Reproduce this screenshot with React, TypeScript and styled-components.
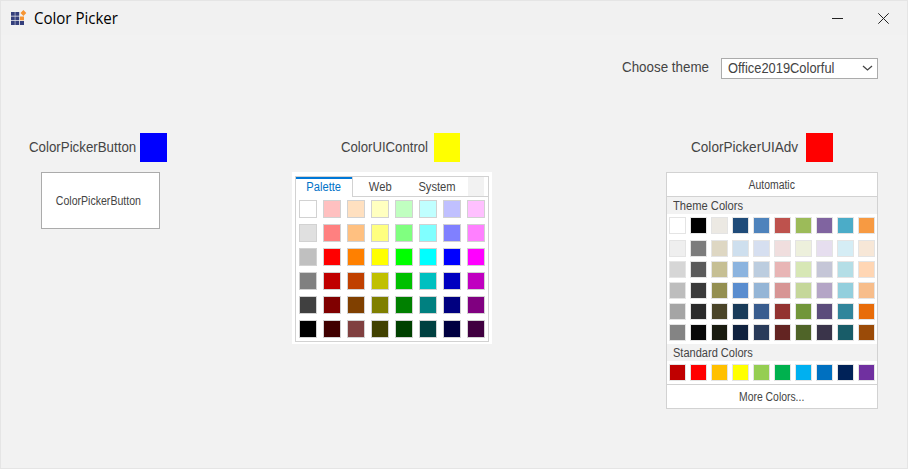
import React from "react";
import styled, { createGlobalStyle } from "styled-components";

const GlobalStyle = createGlobalStyle`
  * { box-sizing: border-box; }
  body { margin: 0; background: #f2f2f2; }
  button { font: inherit; color: inherit; padding: 0; margin: 0; }
`;

const Window = styled.div`
  width: 908px;
  height: 469px;
  border: 1px solid #e5e5e5;
  background: #f2f2f2;
  color: #444;
  font: 14px/16px "Liberation Sans", Arial, sans-serif;
  white-space: nowrap;
  overflow: hidden;
`;

const TitleBar = styled.header`
  display: flex;
  align-items: center;
  height: 34px;
  padding: 0 18px 0 10px;
  background: #f1f1f1;
`;

const Title = styled.h1`
  flex: 1;
  margin: 0 0 0 7px;
  color: #000;
  font: 400 16px/22px "Open Sans", "Noto Sans", sans-serif;
`;

const Caption = styled.button`
  display: flex;
  width: 11px;
  height: 11px;
  margin-left: 35px;
  border: 0;
  background: none;
`;

const ThemeRow = styled.div`
  display: flex;
  justify-content: flex-end;
  padding: 23px 29px 0 0;
  height: 44px;
`;

const Condensed = styled.span<{ $scale: number; $origin?: string }>`
  display: inline-block;
  transform: scaleX(${(p) => p.$scale});
  transform-origin: ${(p) => p.$origin ?? "left"};
`;

const Label = styled(Condensed)<{ $w: number }>`
  flex: none;
  width: ${(p) => p.$w}px;
  margin-bottom: 2px;
`;

const ThemeLabel = styled(Label)`
  margin-top: 1px;
`;

const Combo = styled.div`
  display: flex;
  align-items: center;
  width: 157px;
  height: 21px;
  padding: 0 4px 0 6px;
  border: 1px solid #ababab;
  background: #fff;
`;

const ComboText = styled(Condensed)`
  flex: none;
  width: 134px;
  margin-bottom: 1px;
`;

const Columns = styled.main`
  display: flex;
  padding: 54px 29px 0 28px;
`;

const Column = styled.section<{ $w: number; $gap?: number }>`
  flex: none;
  width: ${(p) => p.$w}px;
  margin-left: ${(p) => p.$gap ?? 0}px;
`;

const Heading = styled.div<{ $indent: number }>`
  display: flex;
  align-items: center;
  height: 29px;
  margin-bottom: 10px;
  padding-left: ${(p) => p.$indent}px;
`;

const Preview = styled.div<{ $color: string; $w?: number }>`
  width: ${(p) => p.$w ?? 27}px;
  height: 29px;
  background: ${(p) => p.$color};
`;

const PickerButton = styled.button`
  && {
    display: block;
    width: 119px;
    height: 57px;
    margin-left: 12px;
    padding-right: 4px;
    border: 1px solid #ababab;
    background: #fff;
    font-size: 12px;
  }
`;

const PaletteFrame = styled.div`
  width: 200px;
  height: 172px;
  padding: 4px 3px 2px;
  background: #fff;
`;

const PaletteBox = styled.div`
  height: 166px;
  border: 1px solid #d2d2d2;
`;

const Tabs = styled.div`
  display: flex;
  height: 20px;
  font-size: 12px;
`;

const Tab = styled.button<{ $w: number; $active?: boolean }>`
  && {
    width: ${(p) => p.$w}px;
    border: 0 solid #d2d2d2;
    border-right-width: ${(p) => (p.$active ? 1 : 0)}px;
    border-bottom-width: ${(p) => (p.$active ? 0 : 1)}px;
    background: #fff;
    box-shadow: ${(p) => (p.$active ? "inset 0 2px #0078d7" : "none")};
    color: ${(p) => (p.$active ? "#0173c7" : "#444")};
    line-height: 18px;
  }
`;

const TabScroller = styled.div`
  width: 16px;
  background: #f2f2f2;
  border-bottom: 1px solid #d2d2d2;
`;

const TabFill = styled.div`
  flex: 1;
  border-bottom: 1px solid #d2d2d2;
`;

const PaletteGrid = styled.div`
  display: grid;
  grid-template-columns: repeat(8, 18px);
  gap: 6px;
  padding: 3px;
`;

const Swatch = styled.div<{ $color: string; $size: number; $line: string }>`
  height: ${(p) => p.$size}px;
  border: 1px solid ${(p) => p.$line};
  background: ${(p) => p.$color};
`;

const AdvPanel = styled.div`
  width: 212px;
  height: 237px;
  border: 1px solid #d2d2d2;
  background: #fff;
  font-size: 12px;
`;

const AdvCommand = styled.button<{ $edge: "top" | "bottom" }>`
  && {
    display: block;
    width: 100%;
    height: 24px;
    border: 0 solid #d2d2d2;
    border-${(p) => p.$edge}-width: 1px;
    background: #fff;
  }
`;

const GroupTitle = styled.div`
  height: 17px;
  padding-left: 6px;
  background: #f2f2f2;
  line-height: 18px;
`;

const AdvGrid = styled.div<{ $pt: number; $pb: number }>`
  display: grid;
  grid-template-columns: repeat(10, 17px);
  gap: 4px;
  padding: ${(p) => p.$pt}px 2px ${(p) => p.$pb}px;
`;

const palette = [
  "#fff #ffc0c0 #ffe0c0 #ffffc0 #c0ffc0 #c0ffff #c0c0ff #ffc0ff",
  "#e0e0e0 #ff8080 #ffc080 #ffff80 #80ff80 #80ffff #8080ff #ff80ff",
  "#c0c0c0 #ff0000 #ff8000 #ffff00 #00ff00 #00ffff #0000ff #ff00ff",
  "#808080 #c00000 #c04000 #c0c000 #00c000 #00c0c0 #0000c0 #c000c0",
  "#404040 #800000 #804000 #808000 #008000 #008080 #000080 #800080",
  "#000 #400000 #804040 #404000 #004000 #004040 #000040 #400040",
].join(" ").split(" ");

const themeBase = "#fff #000 #ece9e3 #1f4b79 #4e83bc #be524d #9cbb59 #8064a0 #4bacc8 #f79a42".split(" ");

const themeShades = [
  "#efefef #7c7c7c #ded7c3 #cedfee #d6dff0 #f0dede #edf0dc #e6deef #d5edf5 #f7e7d7",
  "#d6d6d6 #5b5b5b #c6bf94 #8cb4df #bccddf #e8b5b5 #d7e7b5 #c5c6d7 #b4dee6 #ffd6b4",
  "#bdbdbd #3a3a3a #948f51 #5a8dcf #94b5d6 #d79594 #c5d79a #b4a5c6 #93cfdd #f7bd8b",
  "#a5a5a5 #2a2a2a #4a4428 #193b59 #395d8f #933331 #71963a #5b4c7b #31859b #e86c09",
  "#848484 #080808 #191b10 #10223f #293b5a #632422 #4f6428 #3a344a #185c68 #9b4b08",
].join(" ").split(" ");

const standard = "#c00000 #ff0000 #ffc000 #ffff00 #95ce52 #00b14e #00b0f0 #0070c0 #002258 #7030a0".split(" ");

const Logo = () => (
  <svg width="16" height="16" viewBox="0 0 16 16">
    <g fill="#343f7c">
      <path d="M0 2h3.8v3.8H0zM4.3 2h3.9v3.8H4.3zM0 6.5h3.8v3.8H0zM4.3 6.5h3.9v3.8H4.3zM0 11h3.8v4H0zM4.3 11h3.9v4H4.3zM9 11h4v4H9z" />
    </g>
    <path d="M9 6.5h4v3.8H9zM12.4.1l2.9 2.9-2.9 2.9-2.9-2.9z" fill="#f69432" />
  </svg>
);

export default function App() {
  return (
    <>
      <GlobalStyle />
      <Window>
        <TitleBar>
          <Logo />
          <Title>
            <Condensed $scale={0.94}>Color Picker</Condensed>
          </Title>
          <Caption aria-label="Minimize">
            <svg width="11" height="11" shapeRendering="crispEdges">
              <path d="M0 5.5h11" stroke="#222" />
            </svg>
          </Caption>
          <Caption aria-label="Close">
            <svg width="11" height="11">
              <path d="M.3.3l10.4 10.4M10.7.3L.3 10.7" stroke="#222" />
            </svg>
          </Caption>
        </TitleBar>
        <ThemeRow>
          <ThemeLabel $w={99} $scale={0.955}>Choose theme</ThemeLabel>
          <Combo>
            <ComboText $scale={0.92}>Office2019Colorful</ComboText>
            <svg width="11" height="7" fill="none">
              <path d="M1 1l4.5 4L10 1" stroke="#444" strokeWidth="1.3" />
            </svg>
          </Combo>
        </ThemeRow>
        <Columns>
          <Column $w={138}>
            <Heading $indent={0}>
              <Label $w={111} $scale={0.95}>ColorPickerButton</Label>
              <Preview $color="#0000ff" />
            </Heading>
            <PickerButton>
              <Condensed $scale={0.88} $origin="center">ColorPickerButton</Condensed>
            </PickerButton>
          </Column>
          <Column $w={200} $gap={125}>
            <Heading $indent={49}>
              <Label $w={93} $scale={0.94}>ColorUIControl</Label>
              <Preview $color="#ffff00" $w={26} />
            </Heading>
            <PaletteFrame>
              <PaletteBox>
                <Tabs>
                  <Tab $w={57} $active>
                    <Condensed $scale={0.93} $origin="center">Palette</Condensed>
                  </Tab>
                  <Tab $w={54}>
                    <Condensed $scale={0.93} $origin="center">Web</Condensed>
                  </Tab>
                  <Tab $w={61}>
                    <Condensed $scale={0.93} $origin="center">System</Condensed>
                  </Tab>
                  <TabScroller />
                  <TabFill />
                </Tabs>
                <PaletteGrid>
                  {palette.map((c, i) => (
                    <Swatch key={i} $color={c} $size={18} $line="#d2d2d2" />
                  ))}
                </PaletteGrid>
              </PaletteBox>
            </PaletteFrame>
          </Column>
          <Column $w={212} $gap={174}>
            <Heading $indent={25}>
              <Label $w={115} $scale={0.97}>ColorPickerUIAdv</Label>
              <Preview $color="#ff0000" />
            </Heading>
            <AdvPanel>
              <AdvCommand $edge="bottom">
                <Condensed $scale={0.87} $origin="center">Automatic</Condensed>
              </AdvCommand>
              <GroupTitle>
                <Condensed $scale={0.93}>Theme Colors</Condensed>
              </GroupTitle>
              <AdvGrid $pt={3} $pb={0}>
                {themeBase.map((c, i) => (
                  <Swatch key={i} $color={c} $size={17} $line="#e4e4e4" />
                ))}
              </AdvGrid>
              <AdvGrid $pt={6} $pb={3}>
                {themeShades.map((c, i) => (
                  <Swatch key={i} $color={c} $size={17} $line="#e4e4e4" />
                ))}
              </AdvGrid>
              <GroupTitle>
                <Condensed $scale={0.92}>Standard Colors</Condensed>
              </GroupTitle>
              <AdvGrid $pt={3} $pb={3}>
                {standard.map((c, i) => (
                  <Swatch key={i} $color={c} $size={17} $line="#e4e4e4" />
                ))}
              </AdvGrid>
              <AdvCommand $edge="top">
                <Condensed $scale={0.865} $origin="center">More Colors...</Condensed>
              </AdvCommand>
            </AdvPanel>
          </Column>
        </Columns>
      </Window>
    </>
  );
}
